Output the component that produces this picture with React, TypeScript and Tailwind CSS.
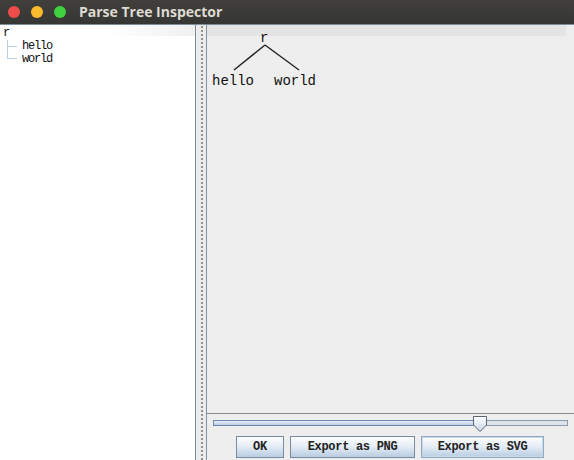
import React from "react";

function TreeCanvas() {
  return (
    <svg width="130" height="70" className="block" style={{ marginLeft: 3, marginTop: 4 }}>
      <text x="49" y="13" fontFamily="'Liberation Mono', monospace" fontSize="14" fill="#111">r</text>
      <line x1="54" y1="16" x2="23" y2="41" stroke="#222" strokeWidth="1.4" />
      <line x1="54" y1="16" x2="88" y2="41" stroke="#222" strokeWidth="1.4" />
      <text x="1" y="56" fontFamily="'Liberation Mono', monospace" fontSize="14" fill="#111">hello</text>
      <text x="63" y="56" fontFamily="'Liberation Mono', monospace" fontSize="14" fill="#111">world</text>
    </svg>
  );
}

function Btn({ label, w, focus }: { label: string; w: string; focus?: boolean }) {
  return (
    <div
      className={`${w} h-[22px] flex items-center justify-center border ${focus ? "border-[#8fa9c4] shadow-[inset_0_0_0_1px_#c9d8e7]" : "border-[#7a8aa3]"} bg-gradient-to-b from-[#fdfeff] via-[#e3ebf4] to-[#b9cde2] text-[12px] font-bold text-[#222] font-['Liberation_Mono',monospace] tracking-[-0.3px]`}
    >
      {label}
    </div>
  );
}

export default function App() {
  return (
    <div className="w-[574px] h-[460px] flex flex-col overflow-hidden bg-[#eeeeee] font-['Liberation_Sans',sans-serif]">
      {/* Title bar */}
      <div className="h-[25px] flex items-center bg-gradient-to-b from-[#403f3c] to-[#363634] border-b border-[#7f8d9b] shrink-0">
        <div className="flex items-center gap-[11px] ml-[8px]">
          <div className="w-[12px] h-[12px] rounded-full bg-[#ee4c4a]" />
          <div className="w-[12px] h-[12px] rounded-full bg-[#f9bb2d]" />
          <div className="w-[12px] h-[12px] rounded-full bg-[#3fd13f]" />
        </div>
        <div className="ml-[13px] text-[14px] font-bold text-[#dfdbd2] font-['Open_Sans',sans-serif] leading-none">
          Parse Tree Inspector
        </div>
      </div>

      {/* Body */}
      <div className="flex-1 flex min-h-0">
        {/* Left tree panel */}
        <div className="w-[196px] bg-white border-r border-[#7d8a97] relative shrink-0">
          <div className="absolute top-0 left-[110px] right-0 h-[11px] bg-gradient-to-r from-white to-[#f0f0f0]" />
          <div className="relative font-['Liberation_Mono',monospace] text-[12px] tracking-[-1.2px] text-[#111] leading-[13px] pt-[2px]">
            <div className="pl-[3px] h-[13px] overflow-hidden">r</div>
            <div className="flex h-[13px] items-center overflow-hidden">
              <svg width="22" height="13" className="shrink-0">
                <line x1="7.5" y1="0" x2="7.5" y2="13" stroke="#b9cfe5" />
                <line x1="7" y1="6.5" x2="17" y2="6.5" stroke="#b9cfe5" />
              </svg>
              <span className="leading-[13px]">hello</span>
            </div>
            <div className="flex h-[13px] items-center overflow-hidden">
              <svg width="22" height="13" className="shrink-0">
                <line x1="7.5" y1="0" x2="7.5" y2="6" stroke="#b9cfe5" />
                <line x1="7" y1="5.5" x2="17" y2="5.5" stroke="#b9cfe5" />
              </svg>
              <span className="leading-[13px]">world</span>
            </div>
          </div>
        </div>

        {/* Splitter */}
        <div className="w-[11px] shrink-0 bg-[#ececec] border-r border-[#8594a3] flex justify-center">
          <div className="w-[2px] ml-[1px] bg-[radial-gradient(circle,#8a8a8a_0.7px,transparent_0.8px)] bg-[length:2px_4px]" />
        </div>

        {/* Right panel */}
        <div className="flex-1 flex flex-col min-w-0 bg-[#eeeeee]">
          <div className="flex-1 relative">
            <div className="absolute top-0 left-0 right-[8px] h-[11px] bg-[#e4e4e4]" />
            <div className="relative pl-[1px]">
              <TreeCanvas />
            </div>
          </div>
          <div className="h-[47px] border-t border-[#8a8a8a] shrink-0 flex flex-col">
            {/* slider */}
            <div className="relative h-[18px] mx-[6px] mr-[6px]">
              <div className="absolute left-0 right-0 top-[6px] h-[6px] border border-[#8a9bab] bg-[#dfe4ea]" />
              <div className="absolute left-0 w-[262px] top-[6px] h-[6px] border border-[#6d87b5] bg-gradient-to-b from-[#e9f0f8] to-[#b9cde2]" />
              <svg width="16" height="18" className="absolute left-[259px] top-[1px]">
                <defs>
                  <linearGradient id="tg" x1="0" y1="0" x2="0" y2="1">
                    <stop offset="0" stopColor="#ffffff" />
                    <stop offset="1" stopColor="#c6d7e8" />
                  </linearGradient>
                </defs>
                <path d="M1.5 1.5 H14.5 V10 L8 16.5 L1.5 10 Z" fill="url(#tg)" stroke="#5b6670" strokeWidth="1" />
              </svg>
            </div>
            <div className="flex justify-center gap-[6px] mt-[4px] pr-[1px]">
              <Btn label="OK" w="w-[48px]" />
              <Btn label="Export as PNG" w="w-[125px]" />
              <Btn label="Export as SVG" w="w-[123px]" focus />
            </div>
          </div>
        </div>
      </div>
    </div>
  );
}
